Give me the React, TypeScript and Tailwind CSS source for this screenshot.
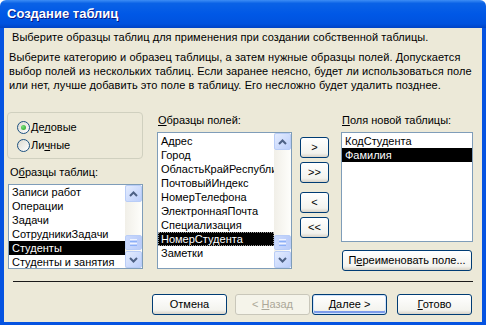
import React from "react";

const font = "font-['Tahoma','Liberation_Sans',sans-serif]";

function Arrow({ up }: { up?: boolean }) {
  return (
    <svg width="9" height="6" viewBox="0 0 9 6">
      <polyline
        points={up ? "1,5 4.5,1.5 8,5" : "1,1 4.5,4.5 8,1"}
        fill="none"
        stroke="#4D6185"
        strokeWidth="2"
      />
    </svg>
  );
}

function ScrollBtn({ up }: { up?: boolean }) {
  return (
    <div className="w-[17px] h-[17px] shrink-0 rounded-[2px] border border-[#B9CDF7] bg-[linear-gradient(to_bottom_right,#E4ECFE,#BCCFFB)] flex items-center justify-center">
      <Arrow up={up} />
    </div>
  );
}

function ScrollBar() {
  return (
    <div className="w-[17px] flex flex-col bg-[linear-gradient(to_right,#F1EFE8,#FEFEFB)]">
      <ScrollBtn up />
      <div className="flex-1 flex flex-col justify-end pb-[1px]">
        <div className="h-[15px] rounded-[2px] border border-[#B9CDF7] bg-[linear-gradient(to_right,#CAD9FD,#BACCF9)] flex flex-col items-center justify-center gap-[1px]">
          <div className="w-[7px] h-[1px] bg-[#EEF3FF]" />
          <div className="w-[7px] h-[1px] bg-[#8CB0F8]" />
          <div className="w-[7px] h-[1px] bg-[#EEF3FF]" />
          <div className="w-[7px] h-[1px] bg-[#8CB0F8]" />
        </div>
      </div>
      <ScrollBtn />
    </div>
  );
}

interface ListProps {
  items: string[];
  selected: number;
  focus?: boolean;
  scroll?: boolean;
  className: string;
  top?: boolean;
}

function ListBox({ items, selected, focus, scroll, className, top }: ListProps) {
  return (
    <div className={`border border-[#7F9DB9] bg-white flex ${className}`}>
      <div className={`flex-1 overflow-hidden ${top ? "pt-[1px]" : ""}`}>
        {items.map((it, i) => (
          <div
            key={it}
            className={`h-[14px] leading-[14px] pl-[3px] whitespace-nowrap ${
              i === selected ? "bg-black text-white" : ""
            } ${i === selected && focus ? "outline-1 outline-dotted outline-[#9a9a9a] -outline-offset-1" : ""}`}
          >
            {it}
          </div>
        ))}
      </div>
      {scroll && <ScrollBar />}
    </div>
  );
}

function XPButton({
  children,
  className = "",
  isDefault,
  disabled,
}: {
  children: React.ReactNode;
  className?: string;
  isDefault?: boolean;
  disabled?: boolean;
}) {
  const base = "h-[21px] rounded-[3px] flex items-center justify-center text-[11px] leading-none";
  if (disabled)
    return (
      <div className={`${base} border border-[#C9C7BA] bg-[#F5F4EA] text-[#ACA899] ${className}`}>{children}</div>
    );
  return (
    <div
      className={`${base} border border-[#003C74] bg-[linear-gradient(to_bottom,#FFFFFF,#F3F3EE_80%,#D8D3C8)] text-black ${
        isDefault ? "shadow-[inset_0_0_0_1px_#CEE2FC,inset_0_-2px_0_1px_#7D9CEA]" : ""
      } ${className}`}
    >
      {children}
    </div>
  );
}

function Radio({ checked }: { checked?: boolean }) {
  return (
    <span className="w-[13px] h-[13px] rounded-full border border-[#1C5180] bg-[linear-gradient(to_bottom_right,#DCDAD0,#FFFFFF)] flex items-center justify-center">
      {checked && (
        <span className="w-[5px] h-[5px] rounded-full bg-[radial-gradient(circle_at_35%_35%,#7BE07B,#21A121)]" />
      )}
    </span>
  );
}

export default function App() {
  return (
    <div className={`w-[486px] h-[325px] flex flex-col ${font} text-[11px] text-black bg-white`}>
      <div className="h-[28px] shrink-0 rounded-t-[6px] bg-[linear-gradient(to_bottom,#3D8DF5_0%,#0A62E6_12%,#0058E6_50%,#0052DE_85%,#0043C5_100%)] flex items-center pl-[7px]">
        <span className="font-['Liberation_Sans',sans-serif] font-bold text-[13px] text-white [text-shadow:1px_1px_#0A1883]">
          Создание таблиц
        </span>
      </div>
      <div className="flex-1 flex flex-col bg-[#ECE9D8] border-l-4 border-r-4 border-b-[3px] border-[#0553E1]">
        <div className="pt-[2px] pl-[8px] h-[16px] leading-[14px] whitespace-nowrap tracking-[0.05px]">
          Выберите образцы таблиц для применения при создании собственной таблицы.
        </div>
        <div className="mt-[6px] pl-[5px] leading-[14px] whitespace-nowrap tracking-[0.09px]">
          <div>Выберите категорию и образец таблицы, а затем нужные образцы полей. Допускается</div>
          <div>выбор полей из нескольких таблиц. Если заранее неясно, будет ли использоваться поле</div>
          <div>или нет, лучше добавить это поле в таблицу. Его несложно будет удалить позднее.</div>
        </div>

        <div className="mt-[20px] pl-[3px] flex items-start">
          <div className="w-[137px] flex flex-col">
            <div className="w-[136px] h-[47px] rounded-[4px] border border-[#D0D0BF] pt-[7px] pl-[9px] flex flex-col gap-[4px]">
              <div className="h-[14px] flex items-center gap-[1px]">
                <Radio checked />
                <span>
                  Де<u>л</u>овые
                </span>
              </div>
              <div className="h-[14px] flex items-center gap-[1px]">
                <Radio />
                <span>
                  Ли<u>ч</u>ные
                </span>
              </div>
            </div>
            <div className="mt-[6px] pl-[3px] h-[14px] leading-[14px]">
              О<u>б</u>разцы таблиц:
            </div>
            <ListBox
              className="mt-[5px] ml-[1px] w-[135px] h-[85px]"
              items={["Записи работ", "Операции", "Задачи", "СотрудникиЗадачи", "Студенты", "Студенты и занятия"]}
              selected={4}
              scroll
            />
          </div>

          <div className="ml-[13px] w-[135px] flex flex-col">
            <div className="mt-[1px] pl-[1px] h-[14px] leading-[14px]">
              <u>О</u>бразцы полей:
            </div>
            <ListBox
              className="mt-[5px] w-[135px] h-[137px]"
              items={[
                "Адрес",
                "Город",
                "ОбластьКрайРеспублика",
                "ПочтовыйИндекс",
                "НомерТелефона",
                "ЭлектроннаяПочта",
                "Специализация",
                "НомерСтудента",
                "Заметки",
              ]}
              selected={7}
              focus
              scroll
              top
            />
          </div>

          <div className="ml-[8px] mt-[25px] w-[29px] flex flex-col">
            <XPButton className="w-[29px]">&gt;</XPButton>
            <XPButton className="w-[29px] mt-[4px]">&gt;&gt;</XPButton>
            <XPButton className="w-[29px] mt-[9px]">&lt;</XPButton>
            <XPButton className="w-[29px] mt-[4px]">&lt;&lt;</XPButton>
          </div>

          <div className="ml-[12px] w-[132px] flex flex-col">
            <div className="mt-[1px] pl-[1px] h-[14px] leading-[14px]">
              <u>П</u>оля новой таблицы:
            </div>
            <ListBox
              className="mt-[5px] w-[132px] h-[110px]"
              items={["КодСтудента", "Фамилия"]}
              selected={1}
              top
            />
            <XPButton className="mt-[8px] ml-[1px] w-[130px]">
              <span>
                П<u>е</u>реименовать поле...
              </span>
            </XPButton>
          </div>
        </div>

        <div className="mt-[10px] ml-[9px] w-[460px] h-[1px] bg-[#1a1a1a]" />

        <div className="mt-[12px] pr-[10px] flex justify-end">
          <XPButton className="w-[75px]">Отмена</XPButton>
          <XPButton className="w-[75px] ml-[8px]" disabled>
            <span>
              &lt; <u>Н</u>азад
            </span>
          </XPButton>
          <XPButton className="w-[75px] ml-[2px]" isDefault>
            <span>
              <u>Д</u>алее &gt;
            </span>
          </XPButton>
          <XPButton className="w-[75px] ml-[10px]">
            <span>
              <u>Г</u>отово
            </span>
          </XPButton>
        </div>
      </div>
    </div>
  );
}
